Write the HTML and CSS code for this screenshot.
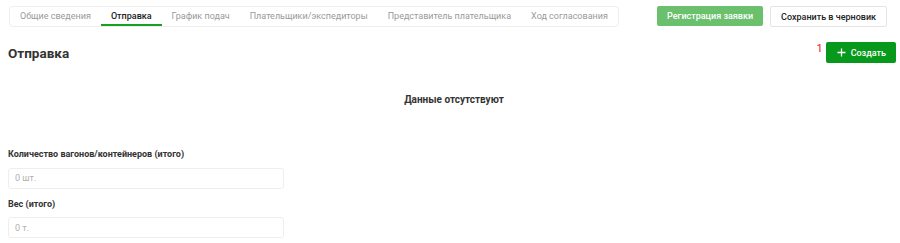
FILE: index.html
```html
<!DOCTYPE html>
<html lang="ru">
<head>
    <meta charset="UTF-8">
    <meta name="viewport" content="width=device-width, initial-scale=1.0">
    <title>Отправка</title>
    <link rel="stylesheet" href="styles.css">
</head>
<body>
    <div class="topbar">
        <nav class="tabs">
            <span class="tab">Общие сведения</span>
            <span class="tab active">Отправка</span>
            <span class="tab">График подач</span>
            <span class="tab">Плательщики/экспедиторы</span>
            <span class="tab">Представитель плательщика</span>
            <span class="tab">Ход согласования</span>
        </nav>
        <div class="actions">
            <button class="btn btn-light-green">Регистрация заявки</button>
            <button class="btn btn-outline">Сохранить в черновик</button>
        </div>
    </div>

    <div class="section-head">
        <h2>Отправка</h2>
        <div class="create-wrap">
            <span class="counter">1</span>
            <button class="btn btn-green">
                <svg width="9" height="9" viewBox="0 0 9 9"><path d="M4.5 0.5v8M0.5 4.5h8" stroke="#fff" stroke-width="1.3"/></svg>
                Создать
            </button>
        </div>
    </div>

    <div class="empty">Данные отсутствуют</div>

    <form class="totals">
        <div class="form-group">
            <label for="wagons">Количество вагонов/контейнеров (итого)</label>
            <input type="text" id="wagons" placeholder="0 шт.">
        </div>
        <div class="form-group">
            <label for="weight">Вес (итого)</label>
            <input type="text" id="weight" placeholder="0 т.">
        </div>
    </form>
</body>
</html>
```

FILE: styles.css
```css
body {
    font-family: Roboto, "Liberation Sans", Arial, sans-serif;
    margin: 0;
    padding: 6px 4px 0 8px;
    background-color: #fff;
    color: #333;
}
.topbar {
    display: flex;
    justify-content: space-between;
    align-items: flex-start;
}
.tabs {
    display: flex;
    height: 21px;
    margin-left: 1px;
    border: 1px solid #eeeeee;
    border-radius: 4px;
    box-sizing: border-box;
}
.tab {
    padding: 0 10px;
    font-size: 9px;
    line-height: 19px;
    color: #9a9a9a;
    white-space: nowrap;
}
.tab.active {
    color: #222;
    font-weight: 500;
    border-bottom: 2px solid #16a021;
    line-height: 18px;
}
.actions {
    display: flex;
    gap: 7px;
    margin-right: 9px;
}
.btn {
    height: 20px;
    padding: 0 10px;
    border: none;
    border-radius: 2px;
    font-family: inherit;
    font-size: 9px;
    font-weight: 500;
    white-space: nowrap;
    cursor: pointer;
    display: flex;
    align-items: center;
    gap: 5px;
}
.btn-light-green {
    background-color: #6ac06c;
    color: #fff;
}
.btn-outline {
    background-color: #fff;
    color: #222;
    border: 1px solid #e4e4e4;
    height: 21px;
}
.btn-green {
    background-color: #07991b;
    color: #fff;
    height: 21px;
    padding: 0 10px 0 11px;
}
.section-head {
    display: flex;
    justify-content: space-between;
    align-items: center;
    margin-top: 15px;
}
h2 {
    margin: 0;
    font-size: 13.5px;
    font-weight: 700;
    color: #333;
}
.create-wrap {
    display: flex;
    align-items: flex-start;
    gap: 3px;
}
.counter {
    color: #f01820;
    font-size: 11px;
    line-height: 13px;
}
.empty {
    text-align: center;
    font-size: 10px;
    font-weight: 700;
    color: #333;
    margin-top: 31px;
    margin-left: 4px;
}
.totals {
    margin-top: 44px;
}
.form-group {
    margin-bottom: 10px;
}
label {
    display: block;
    font-size: 9px;
    font-weight: 700;
    color: #333;
    margin-bottom: 7px;
}
input[type="text"] {
    width: 276px;
    height: 21px;
    padding: 0 6px;
    border: 1px solid #eeeeee;
    border-radius: 3px;
    box-sizing: border-box;
    font-family: inherit;
    font-size: 9px;
}
input::placeholder {
    color: #b0b0b0;
}
```
